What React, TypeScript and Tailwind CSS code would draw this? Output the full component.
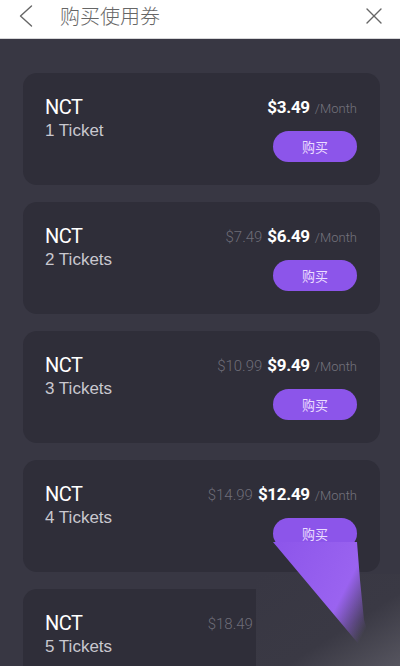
import { X } from 'lucide-react';

type Plan = { count: string; old?: string; price: string };

const plans: Plan[] = [
  { count: '1 Ticket', price: '$3.49' },
  { count: '2 Tickets', old: '$7.49', price: '$6.49' },
  { count: '3 Tickets', old: '$10.99', price: '$9.49' },
  { count: '4 Tickets', old: '$14.99', price: '$12.49' },
  { count: '5 Tickets', old: '$18.49', price: '$15.49' },
];

function PlanCard({ plan }: { plan: Plan }) {
  return (
    <div className="flex h-[112px] shrink-0 justify-between rounded-[14px] bg-[#2f2e39] pl-[22px] pr-[23px] pt-[22px]">
      <div className="flex flex-col">
        <span className="font-['Roboto',sans-serif] text-[20px] leading-[24px] tracking-[-0.5px] text-white">NCT</span>
        <span className="mt-[2px] font-['Liberation_Sans',sans-serif] text-[17px] leading-[20px] text-[#c9c8cf]">
          {plan.count}
        </span>
      </div>
      <div className="flex flex-col items-end">
        <div className="flex items-baseline gap-[5px] font-['Roboto',sans-serif] leading-[24px]">
          {plan.old && <span className="text-[15px] font-light text-[#6e6d78]">{plan.old}</span>}
          <span className="text-[17px] font-bold tracking-[-0.3px] text-white">{plan.price}</span>
          <span className="text-[13px] font-light text-[#75747e]">/Month</span>
        </div>
        <button className="mt-[10px] flex h-[31px] w-[84px] items-center justify-center rounded-full bg-[#8c55ea] font-['Noto_Sans_CJK_SC',sans-serif] text-[13px] text-[#eadcff]">
          购买
        </button>
      </div>
    </div>
  );
}

// folded-corner decoration over the bottom right of the list
function PageCurl() {
  return (
    <svg
      className="pointer-events-none absolute left-[256px] top-[520px]"
      width="144"
      height="146"
      viewBox="0 0 144 146"
    >
      <defs>
        <linearGradient id="back" x1="0" y1="0" x2="1" y2="1">
          <stop offset="0" stopColor="#383743" />
          <stop offset="0.6" stopColor="#3a3944" />
          <stop offset="1" stopColor="#56555f" />
        </linearGradient>
        <linearGradient id="curl" x1="0" y1="0" x2="1" y2="0.6">
          <stop offset="0" stopColor="#8c55ea" />
          <stop offset="0.7" stopColor="#9a63f0" />
          <stop offset="1" stopColor="#9a63f0" stopOpacity="0" />
        </linearGradient>
      </defs>
      <rect x="0" y="54" width="144" height="92" fill="url(#back)" />
      <polygon points="17,22 101,22 104,60 108,100 118,130 116,140" fill="url(#curl)" />
    </svg>
  );
}

export default function App() {
  return (
    <div className="relative flex h-[666px] w-[400px] flex-col overflow-hidden bg-[#383743]">
      <header className="flex h-[39px] shrink-0 items-center border-b border-[#d6d6d8] bg-white pb-[6px]">
        <svg className="ml-[19px]" width="14" height="22" viewBox="0 0 14 22" fill="none">
          <polyline points="12.5,1 1.5,11 12.5,21" stroke="#666" strokeWidth="1.4" strokeLinecap="round" strokeLinejoin="round" />
        </svg>
        <span className="ml-[27px] font-['Noto_Sans_CJK_SC',sans-serif] text-[20px] font-light leading-none text-[#666]">
          购买使用券
        </span>
        <X className="ml-auto mr-[12px] h-[28px] w-[28px] text-[#666]" strokeWidth={1.2} />
      </header>
      <main className="flex flex-col gap-[17px] pl-[23px] pr-[20px] pt-[34px]">
        {plans.map((p) => (
          <PlanCard key={p.count} plan={p} />
        ))}
      </main>
      <PageCurl />
    </div>
  );
}
